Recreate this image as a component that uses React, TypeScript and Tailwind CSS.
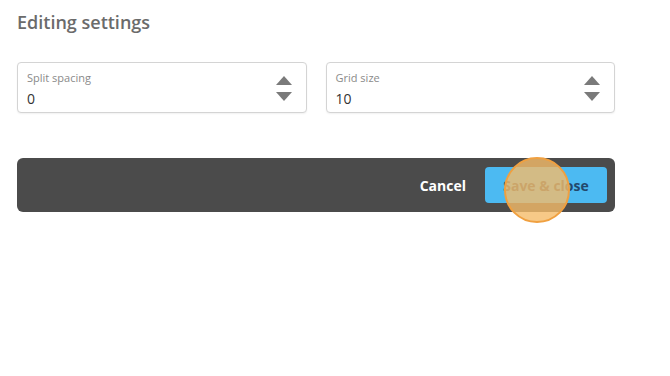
import React from "react";

function Stepper() {
  return (
    <div className="mt-[2px] flex flex-col items-center gap-[7px]">
      <svg width="16" height="9" viewBox="0 0 16 9">
        <polygon points="8,0 16,9 0,9" fill="#7a7a7a" />
      </svg>
      <svg width="16" height="9" viewBox="0 0 16 9">
        <polygon points="0,0 16,0 8,9" fill="#7a7a7a" />
      </svg>
    </div>
  );
}

function Field({ label, value }: { label: string; value: string }) {
  return (
    <div className="flex h-[51px] items-center justify-between rounded-[4px] border border-[#d4d4d4] bg-white pl-[9px] pr-[14px] shadow-[0_1px_2px_rgba(0,0,0,0.06)]">
      <div className="mt-[4px] flex flex-col">
        <span className="text-[11px] leading-[14px] text-[#8a8a8a]">{label}</span>
        <span className="mt-[5px] text-[14px] leading-[18px] text-[#333]">{value}</span>
      </div>
      <Stepper />
    </div>
  );
}

export default function App() {
  return (
    <div
      className="h-[376px] w-[670px] bg-white"
      style={{ fontFamily: '"Open Sans", "Noto Sans", sans-serif' }}
    >
      <div className="ml-[17px] w-[598px] pt-[9px]">
        <h1 className="text-[18px] font-semibold leading-[26px] text-[#6b6b6b]">Editing settings</h1>
        <div className="mt-[27px] grid grid-cols-2 gap-[19px]">
          <Field label="Split spacing" value="0" />
          <Field label="Grid size" value="10" />
        </div>
        <div className="mt-[45px] flex h-[54px] items-center justify-end rounded-[6px] bg-[#4b4b4b] pr-[8px]">
          <button className="mr-[19px] text-[14px] font-bold text-white">Cancel</button>
          <div className="relative">
            <button className="flex h-[36px] w-[122px] items-center justify-center rounded-[4px] bg-[#4cbaf2] text-[14px] font-bold text-[#23486c]">
              Save &amp; close
            </button>
            <div className="absolute left-[19px] top-[-10px] h-[66px] w-[66px] rounded-full border-2 border-[#f0a040] bg-[rgba(245,188,105,0.8)]" />
          </div>
        </div>
      </div>
    </div>
  );
}
